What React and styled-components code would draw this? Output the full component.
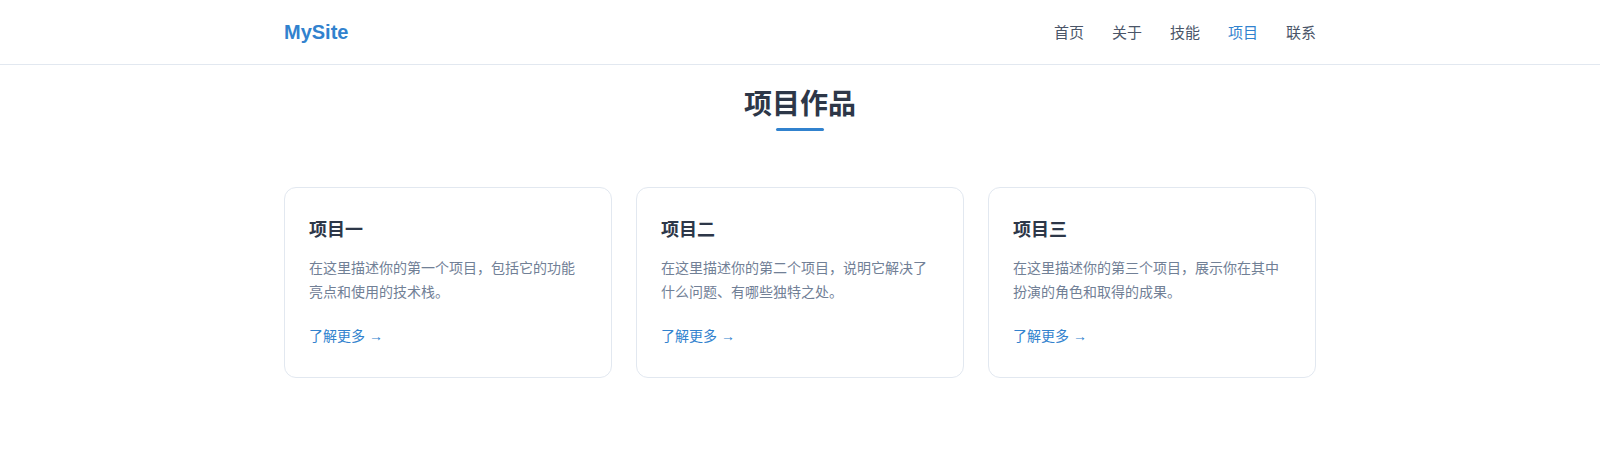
import React from "react";
import styled, { createGlobalStyle } from "styled-components";

const GlobalStyle = createGlobalStyle`
  * { box-sizing: border-box; }
  html, body { margin: 0; padding: 0; background: #ffffff; }
  body {
    font-family: "Liberation Sans", "Noto Sans CJK SC", sans-serif;
    color: #2d3748;
    -webkit-font-smoothing: antialiased;
  }
`;

const Header = styled.header`
  height: 65px;
  border-bottom: 1px solid #e2e8f0;
  background: #ffffff;
`;

const Container = styled.div`
  width: 1032px;
  margin: 0 auto;
`;

const HeaderInner = styled(Container)`
  height: 64px;
  display: flex;
  align-items: center;
  justify-content: space-between;
`;

const Logo = styled.a`
  font-family: "Liberation Sans", Arial, sans-serif;
  font-size: 20px;
  font-weight: 700;
  color: #3182ce;
  text-decoration: none;
  line-height: 1;
`;

const Nav = styled.nav`
  display: flex;
  gap: 28px;
  padding-bottom: 2px;
`;

const NavLink = styled.a`
  font-family: "Noto Sans CJK SC", sans-serif;
  font-size: 15px;
  line-height: 1.4;
  color: ${(p) => (p.$active ? "#3182ce" : "#4a5568")};
  text-decoration: none;
`;

const Section = styled.section`
  padding-top: 21px;
`;

const SectionTitle = styled.h2`
  margin: 0;
  font-family: "Noto Sans CJK SC", sans-serif;
  font-size: 28px;
  font-weight: 700;
  line-height: 1.2;
  color: #2d3748;
  text-align: center;

  &::after {
    content: "";
    display: block;
    width: 48px;
    height: 3px;
    margin: 8px auto 0;
    background: #3182ce;
    border-radius: 2px;
  }
`;

const Grid = styled(Container)`
  margin-top: 56px;
  display: grid;
  grid-template-columns: repeat(3, 1fr);
  gap: 24px;
`;

const Card = styled.article`
  background: #ffffff;
  border: 1px solid #e2e8f0;
  border-radius: 12px;
  padding: 28px 24px 28px;
  font-family: "Noto Sans CJK SC", sans-serif;
`;

const CardTitle = styled.h3`
  margin: 0 0 15px;
  font-size: 18px;
  font-weight: 700;
  line-height: 1.4;
  color: #2d3748;
`;

const CardText = styled.p`
  margin: 0 0 21px;
  font-size: 14px;
  line-height: 1.7;
  color: #718096;
`;

const MoreLink = styled.a`
  display: block;
  font-size: 14px;
  line-height: 1.7;
  color: #3182ce;
  text-decoration: none;
`;

const Arrow = styled.span`
  font-family: "Liberation Sans", Arial, sans-serif;
  margin-left: 4px;
`;

const projects = [
  {
    title: "项目一",
    text: "在这里描述你的第一个项目，包括它的功能亮点和使用的技术栈。",
  },
  {
    title: "项目二",
    text: "在这里描述你的第二个项目，说明它解决了什么问题、有哪些独特之处。",
  },
  {
    title: "项目三",
    text: "在这里描述你的第三个项目，展示你在其中扮演的角色和取得的成果。",
  },
];

const navItems = ["首页", "关于", "技能", "项目", "联系"];

export default function App() {
  return (
    <>
      <GlobalStyle />
      <Header>
        <HeaderInner>
          <Logo href="#">MySite</Logo>
          <Nav>
            {navItems.map((item) => (
              <NavLink key={item} href="#" $active={item === "项目"}>
                {item}
              </NavLink>
            ))}
          </Nav>
        </HeaderInner>
      </Header>
      <Section>
        <SectionTitle>项目作品</SectionTitle>
        <Grid>
          {projects.map((p) => (
            <Card key={p.title}>
              <CardTitle>{p.title}</CardTitle>
              <CardText>{p.text}</CardText>
              <MoreLink href="#">
                了解更多<Arrow>→</Arrow>
              </MoreLink>
            </Card>
          ))}
        </Grid>
      </Section>
    </>
  );
}
